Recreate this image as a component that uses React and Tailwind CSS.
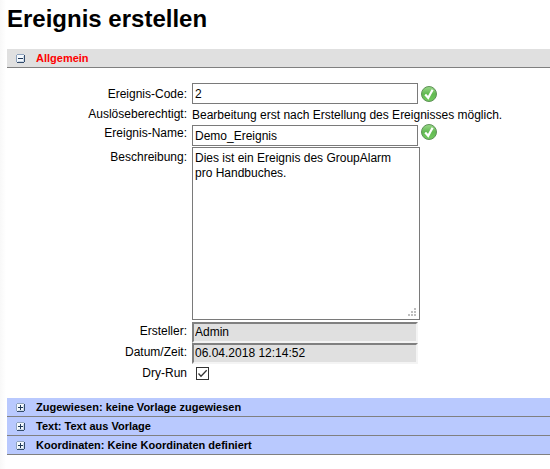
import React from "react";

function ToggleIcon({ open }) {
  return (
    <svg width="9" height="9" viewBox="0 0 9 9" shapeRendering="crispEdges" aria-hidden="true">
      <path d="M1 0h7v1h1v7H8v1H1V8H0V1h1z" fill="#8fa3bd" />
      <path d="M8 1h1v7H8v1H1V8h7z" fill="#334b6b" />
      <rect x="1" y="1" width="7" height="7" fill="#f4f8fc" />
      <path d="M7 2h1v6H2V7h5z" fill="#c9d7e6" />
      <rect x="2" y="4" width="5" height="1" fill="#1f3858" />
      {!open && <rect x="4" y="2" width="1" height="5" fill="#1f3858" />}
    </svg>
  );
}

function SectionBar({ title, open }) {
  return (
    <button
      type="button"
      aria-expanded={!!open}
      className={`flex h-[19px] w-full items-center gap-[11px] border-b border-[#808080] pl-[9px] text-left text-[11px] leading-[18px] font-bold ${
        open ? "bg-[#e0e0e0] text-[#ff0000]" : "bg-[#b9c9fe] text-black"
      }`}
    >
      <ToggleIcon open={open} />
      <span>{title}</span>
    </button>
  );
}

function CheckBadge() {
  return (
    <svg width="16" height="16" viewBox="0 0 16 16" role="img" aria-label="OK">
      <defs>
        <linearGradient id="badge" x1="0" y1="0" x2="0" y2="1">
          <stop offset="0" stopColor="#9bd98a" />
          <stop offset="0.5" stopColor="#62b952" />
          <stop offset="1" stopColor="#74cc60" />
        </linearGradient>
      </defs>
      <circle cx="8" cy="8" r="7.5" fill="url(#badge)" stroke="#5f9158" />
      <path d="M4.2 8.4 7.2 11.8 11.6 3.8" fill="none" stroke="#fff" strokeWidth="2.2" />
    </svg>
  );
}

const field = "block h-[21px] w-[226px] text-[12px] leading-[15px] outline-none rounded-none";
const editable = `${field} px-[2px] border border-[#7a7a7a] bg-white`;
const locked = `${field} px-px pb-px border-2 border-t-[#808080] border-l-[#808080] border-r-[#f4f4f4] border-b-[#f4f4f4] bg-[#e0e0e0]`;

function Row({ label, htmlFor, className = "", labelClass = "pt-[2px]", children }) {
  return (
    <div className={`flex gap-[5px] ${className}`}>
      <label htmlFor={htmlFor} className={`w-[180px] shrink-0 text-right leading-[15px] ${labelClass}`}>
        {label}
      </label>
      {children}
    </div>
  );
}

export default function App() {
  return (
    <div className="min-h-screen bg-gradient-to-r from-[#f8f8f8] to-white to-[6px] pl-[7px] font-['Liberation_Sans',Arial,sans-serif] text-[12px] text-black">
      <h1 className="pt-[5px] pb-4 text-[24px] leading-[28px] font-bold">Ereignis erstellen</h1>
      <SectionBar title="Allgemein" open />
      <form className="pt-[15px] pb-[15px]">
        <Row label="Ereignis-Code:" htmlFor="code" className="h-6" labelClass="pt-1">
          <div className="flex items-center gap-[3px] self-start">
            <input id="code" defaultValue="2" className={editable} />
            <CheckBadge />
          </div>
        </Row>
        <div className="flex h-[17px] gap-[5px]">
          <span className="w-[180px] shrink-0 text-right leading-[15px]">Auslöseberechtigt:</span>
          <span className="pt-px leading-[15px]">Bearbeitung erst nach Erstellung des Ereignisses möglich.</span>
        </div>
        <Row label="Ereignis-Name:" htmlFor="name" className="h-[23px]">
          <div className="flex items-start gap-[3px]">
            <input id="name" defaultValue="Demo_Ereignis" className={`${editable} mt-px`} />
            <CheckBadge />
          </div>
        </Row>
        <Row label="Beschreibung:" htmlFor="text" className="h-[175px]" labelClass="pt-[3px]">
          <div className="relative h-[173px] w-[228px]">
            <textarea
              id="text"
              defaultValue="Dies ist ein Ereignis des GroupAlarm pro Handbuches."
              className="block h-full w-full resize-none border border-[#7a7a7a] bg-white py-[3px] pr-4 pl-[2px] text-[12px] leading-[15px] outline-none"
            />
            <svg className="absolute right-1 bottom-1" width="8" height="8" viewBox="0 0 8 8" shapeRendering="crispEdges" fill="#bfbfbf" aria-hidden="true">
              <path d="M6 0h2v2H6zM3 3h2v2H3zM6 3h2v2H6zM0 6h2v2H0zM3 6h2v2H3zM6 6h2v2H6z" />
            </svg>
          </div>
        </Row>
        <Row label="Ersteller:" htmlFor="creator">
          <input id="creator" readOnly defaultValue="Admin" className={locked} />
        </Row>
        <Row label="Datum/Zeit:" htmlFor="date">
          <input id="date" readOnly defaultValue="06.04.2018 12:14:52" className={locked} />
        </Row>
        <Row label="Dry-Run" htmlFor="dry" className="h-[19px]">
          <span className="grid pt-[3px] pl-1">
            <input
              id="dry"
              type="checkbox"
              defaultChecked
              className="col-start-1 row-start-1 h-[13px] w-[13px] appearance-none border border-[#333] bg-white"
            />
            <svg className="pointer-events-none col-start-1 row-start-1" width="13" height="13" viewBox="0 0 13 13" aria-hidden="true">
              <path d="M2.5 6.5 5 9.2 10.7 3.3" fill="none" stroke="#333" strokeWidth="1.3" />
            </svg>
          </span>
        </Row>
      </form>
      <SectionBar title="Zugewiesen: keine Vorlage zugewiesen" />
      <SectionBar title="Text: Text aus Vorlage" />
      <SectionBar title="Koordinaten: Keine Koordinaten definiert" />
    </div>
  );
}
